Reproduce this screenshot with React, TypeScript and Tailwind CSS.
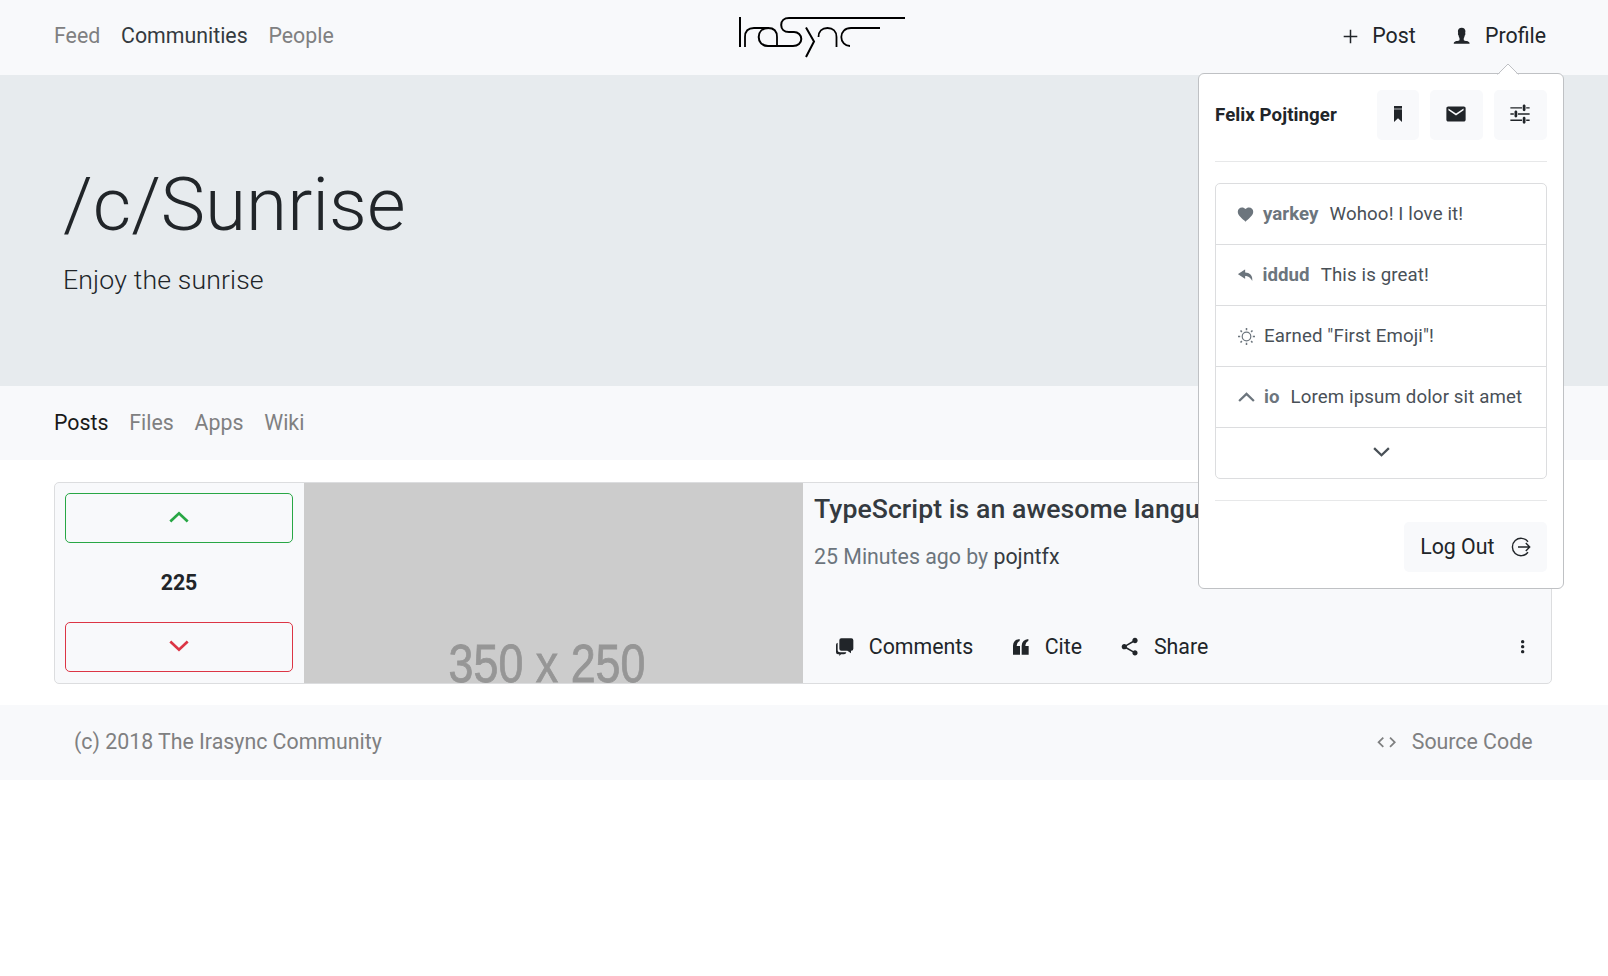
import type { ReactNode } from "react";
import { IoIosPerson, IoIosUndo, IoMdCode, IoMdHeart, IoMdMail, IoMdMore, IoMdOptions, IoMdShare } from "react-icons/io";

function Logo() {
  return (
    <svg width="168" height="44" viewBox="18 15 168 44" fill="none" stroke="#000" strokeWidth="2">
      <path d="M20 17V47" />
      <path d="M25 47V37Q25 28 34 28H48Q57 28 57 37V46" strokeWidth="1.8" />
      <path d="M49 28C42 28 38.7 32 38.7 37C38.7 42 42 46 48 46H73C78 46 81.300 43 81.300 39C81.300 35 78 32 74 32H69C64 32 61.200 29 61.200 25C61.200 21 64 18 69 18H185" />
      <path d="M86 27.500L94 41.500L86 57" />
      <path d="M98.500 37C98.500 31.500 102 28 107.500 28C113 28 116.500 31.500 116.500 37V47" strokeWidth="1.8" />
      <path d="M160 28H131C125 28 121.300 32 121.300 37C121.300 42 125 46 130 46" strokeWidth="1.8" />
    </svg>
  );
}

function Chevron({ up = false, width = 20 }: { up?: boolean; width?: number }) {
  return (
    <svg width={width} height={(width * 12) / 20} viewBox="0 0 20 12" fill="none" stroke="currentColor" strokeWidth="2.700" strokeLinejoin="miter">
      <path d={up ? "M1.300 10.600L10 2.300L18.700 10.600" : "M1.300 1.400L10 9.700L18.700 1.400"} />
    </svg>
  );
}

function PlusIcon() {
  return (
    <svg width="21" height="21" viewBox="0 0 21 21" fill="none" stroke="currentColor" strokeWidth="1.500">
      <path d="M3.700 10.500H17.300M10.500 3.700V17.300" />
    </svg>
  );
}

function BookmarkIcon() {
  return (
    <svg width="8" height="16" viewBox="0 0 8 16" fill="currentColor">
      <path d="M0 0H8V2H0Z" />
      <path d="M0 2H8V4H0Z" opacity="0.65" />
      <path d="M0 4H8V16L4 12.300L0 16Z" />
    </svg>
  );
}

function SunIcon() {
  return (
    <svg width="17" height="17" viewBox="0 0 17 17" fill="none" stroke="currentColor" strokeWidth="1.200">
      <circle cx="8.500" cy="8.500" r="4.300" />
      <path d="M8.500 0V2.200M8.500 14.800V17M0 8.500H2.200M14.800 8.500H17" strokeWidth="1.500" />
      <path d="M2.500 2.500L3.900 3.900M13.100 13.100L14.500 14.500M2.500 14.500L3.900 13.100M13.100 3.900L14.500 2.500" strokeWidth="1.500" />
    </svg>
  );
}

function LogOutIcon() {
  return (
    <svg width="20" height="20" viewBox="0 0 20 20" fill="none" stroke="currentColor" strokeWidth="1.400">
      <path d="M17 4.700A8.700 8.700 0 1 0 17 15.300" />
      <path d="M7 10H18.500M14.800 6L18.700 10L14.800 14" />
    </svg>
  );
}

function CommentsIcon() {
  return (
    <svg width="18" height="18" viewBox="0 0 54 54" fill="currentColor">
      <path d="M16 1H46Q52 1 52 7V32Q52 38 46 38H45V46L34 38H16Q10 38 10 32V7Q10 1 16 1Z" />
      <path d="M5 14V37Q5 43 12 43H31Q30 49 24 49H15L10 54V49H6Q0 49 0 43V20Q0 15 5 14Z" />
    </svg>
  );
}

function QuoteIcon() {
  return (
    <svg width="16" height="16" viewBox="0 0 48 48" fill="currentColor">
      <path d="M0 47V20Q1 2 20 0V6Q12 9 11 21H21V47Z" />
      <path d="M26 47V20Q27 2 46 0V6Q38 9 37 21H47V47Z" />
    </svg>
  );
}

function NavLinks({ items, active, activeClass }: { items: string[]; active: string; activeClass: string }) {
  return (
    <nav className="flex gap-[20.8px] leading-8">
      {items.map((item) => (
        <a key={item} className={item === active ? activeClass : "text-[#7f8081]"}>
          {item}
        </a>
      ))}
    </nav>
  );
}

function Action({ icon, gap, children }: { icon: ReactNode; gap: string; children: ReactNode }) {
  return (
    <a className={`flex items-center leading-8 ${gap}`}>
      <span className="flex w-[21.33px] justify-center">{icon}</span>
      {children}
    </a>
  );
}

function Notice({ icon, iconWidth = "w-[26px]", who, children }: { icon: ReactNode; iconWidth?: string; who?: string; children: ReactNode }) {
  return (
    <li className="flex h-[60.9px] items-center border-b border-[#dcdddf] pt-px pl-[22px] leading-7 tracking-[0.13px] whitespace-nowrap">
      <span className={`flex ${iconWidth}`}>{icon}</span>
      {who && <strong className="mr-[11px] tracking-[0.05px] text-[#6c757d]">{who}</strong>}
      <span>{children}</span>
    </li>
  );
}

function ProfilePopover() {
  return (
    <div className="absolute top-[73px] left-[1198px] h-[516px] w-[366px] rounded-md border border-[#bfc1c4] bg-white px-4 pt-4">
      <svg className="absolute -top-[11px] left-[298px]" width="22" height="12" viewBox="0 0 22 12">
        <path d="M1 12L11 1.500L21 12Z" fill="#fff" />
        <path d="M0.500 11.500L11 1L21.500 11.500" fill="none" stroke="#bfc1c4" />
      </svg>
      <div className="flex h-[50px] items-center">
        <strong className="flex-1 text-[18.67px] leading-7 tracking-[0.08px]">Felix Pojtinger</strong>
        <div className="flex h-full gap-[11px] *:flex *:items-center *:justify-center *:rounded-[5px] *:bg-[#f8f9fb] *:pb-[3px]">
          <button className="w-[42px]"><BookmarkIcon /></button>
          <button className="w-[53px] pr-px"><IoMdMail size={22} /></button>
          <button className="w-[53px] pr-px"><IoMdOptions size={22} /></button>
        </div>
      </div>
      <hr className="mt-[21px] border-[#e7e8e9]" />
      <ul className="mt-[21px] rounded-[5px] border border-[#dcdddf] text-[18.67px] text-[#495057] [&_svg]:text-[#6c757d]">
        <Notice icon={<IoMdHeart size={19} className="-ml-[2px]" />} iconWidth="w-[25px]" who="yarkey">Wohoo! I love it!</Notice>
        <Notice icon={<IoIosUndo size={16.3} className="-ml-px" />} iconWidth="w-[24.5px]" who="iddud">This is great!</Notice>
        <Notice icon={<SunIcon />}>Earned "First Emoji"!</Notice>
        <Notice icon={<Chevron up width={17} />} who="io">Lorem ipsum dolor sit amet</Notice>
        <li className="flex h-[50px] items-center justify-center [&>svg]:text-[#495057]"><Chevron width={17} /></li>
      </ul>
      <hr className="mt-[21px] border-[#e7e8e9]" />
      <div className="mt-[21px] flex justify-end">
        <button className="flex h-[50px] items-center gap-4 rounded-[5px] bg-[#f8f9fb] px-[16.5px] leading-8">
          <span>Log Out</span> <LogOutIcon />
        </button>
      </div>
    </div>
  );
}

export default function App() {
  return (
    <div className="relative min-h-screen bg-white font-[Roboto,sans-serif] text-[21.33px] text-[#212529]">
      <header className="flex h-[75px] items-start bg-[#f8f9fb] pr-[62px] pl-[54px]">
        <div className="w-[684px] pt-5">
          <NavLinks items={["Feed", "Communities", "People"]} active="Communities" activeClass="text-[#343a40]" />
        </div>
        <div className="pt-[15px]"><Logo /></div>
        <div className="ml-auto flex gap-[35px] pt-5">
          <Action icon={<PlusIcon />} gap="gap-[11px]">Post</Action>
          <Action icon={<IoIosPerson size={21.33} />} gap="gap-[13px]">Profile</Action>
        </div>
      </header>

      <section className="h-[311px] bg-[#e7ebee] pt-[85px] pl-[63px] font-light">
        <h1 className="text-[74.67px] leading-[89.6px]">/c/Sunrise</h1>
        <p className="mt-[10px] text-[26.67px] leading-10 tracking-[0.14px]">Enjoy the sunrise</p>
      </section>

      <div className="h-[74px] bg-[#f8f9fb] pt-[21px] pl-[54px]">
        <NavLinks items={["Posts", "Files", "Apps", "Wiki"]} active="Posts" activeClass="text-[#191919]" />
      </div>

      <main className="pt-[22px] pb-[21px] pl-[54px]">
        <article className="flex h-[202px] w-[1498px] overflow-hidden rounded-[5px] border border-[#dcdddf] bg-[#f8f9fb]">
          <div className="flex w-[249px] flex-col items-center justify-between py-[10px] pr-[11px] pb-[11px] pl-[10px]">
            <button className="flex h-[50px] w-full items-center justify-center rounded-[5px] border border-[#28a745] pb-[2px] text-[#28a745]"><Chevron up /></button>
            <strong className="leading-8">225</strong>
            <button className="flex h-[50px] w-full items-center justify-center rounded-[5px] border border-[#dc3545] pb-[2px] text-[#dc3545]"><Chevron /></button>
          </div>
          <div className="w-[499px] overflow-hidden bg-[#cccccc]">
            <svg width="499" height="200" viewBox="0 0 499 200">
              <text x="144.500" y="198.500" textLength="197" lengthAdjust="spacingAndGlyphs" fontFamily="Liberation Sans, Arial, sans-serif" fontSize="53" fill="#969696" stroke="#969696" strokeWidth="0.800">350 x 250</text>
            </svg>
          </div>
          <div className="flex flex-1 flex-col pl-[11px]">
            <h2 className="mt-[10px] text-[26.67px] leading-8 font-medium tracking-[0.04px] text-[#343a40]">TypeScript is an awesome language</h2>
            <p className="mt-4 leading-8 text-[#6c757d]">25 Minutes ago by <span className="text-[#343a40]">pojntfx</span></p>
            <div className="mt-[58px] flex gap-[36.5px] pr-[18px] pl-5">
              <Action icon={<CommentsIcon />} gap="gap-[13.5px]">Comments</Action>
              <Action icon={<QuoteIcon />} gap="gap-[13.5px]">Cite</Action>
              <Action icon={<IoMdShare size={21.33} />} gap="gap-[14px]">Share</Action>
              <button className="ml-auto"><IoMdMore size={21.33} /></button>
            </div>
          </div>
        </article>
      </main>

      <footer className="flex h-[75px] items-start justify-between bg-[#f8f9fb] pt-[21px] pr-[75.5px] pl-[74px] leading-8 text-[#7f8081]">
        <span>(c) 2018 The Irasync Community</span>
        <Action icon={<IoMdCode size={22.5} />} gap="gap-[14px]">Source Code</Action>
      </footer>

      <ProfilePopover />
    </div>
  );
}
